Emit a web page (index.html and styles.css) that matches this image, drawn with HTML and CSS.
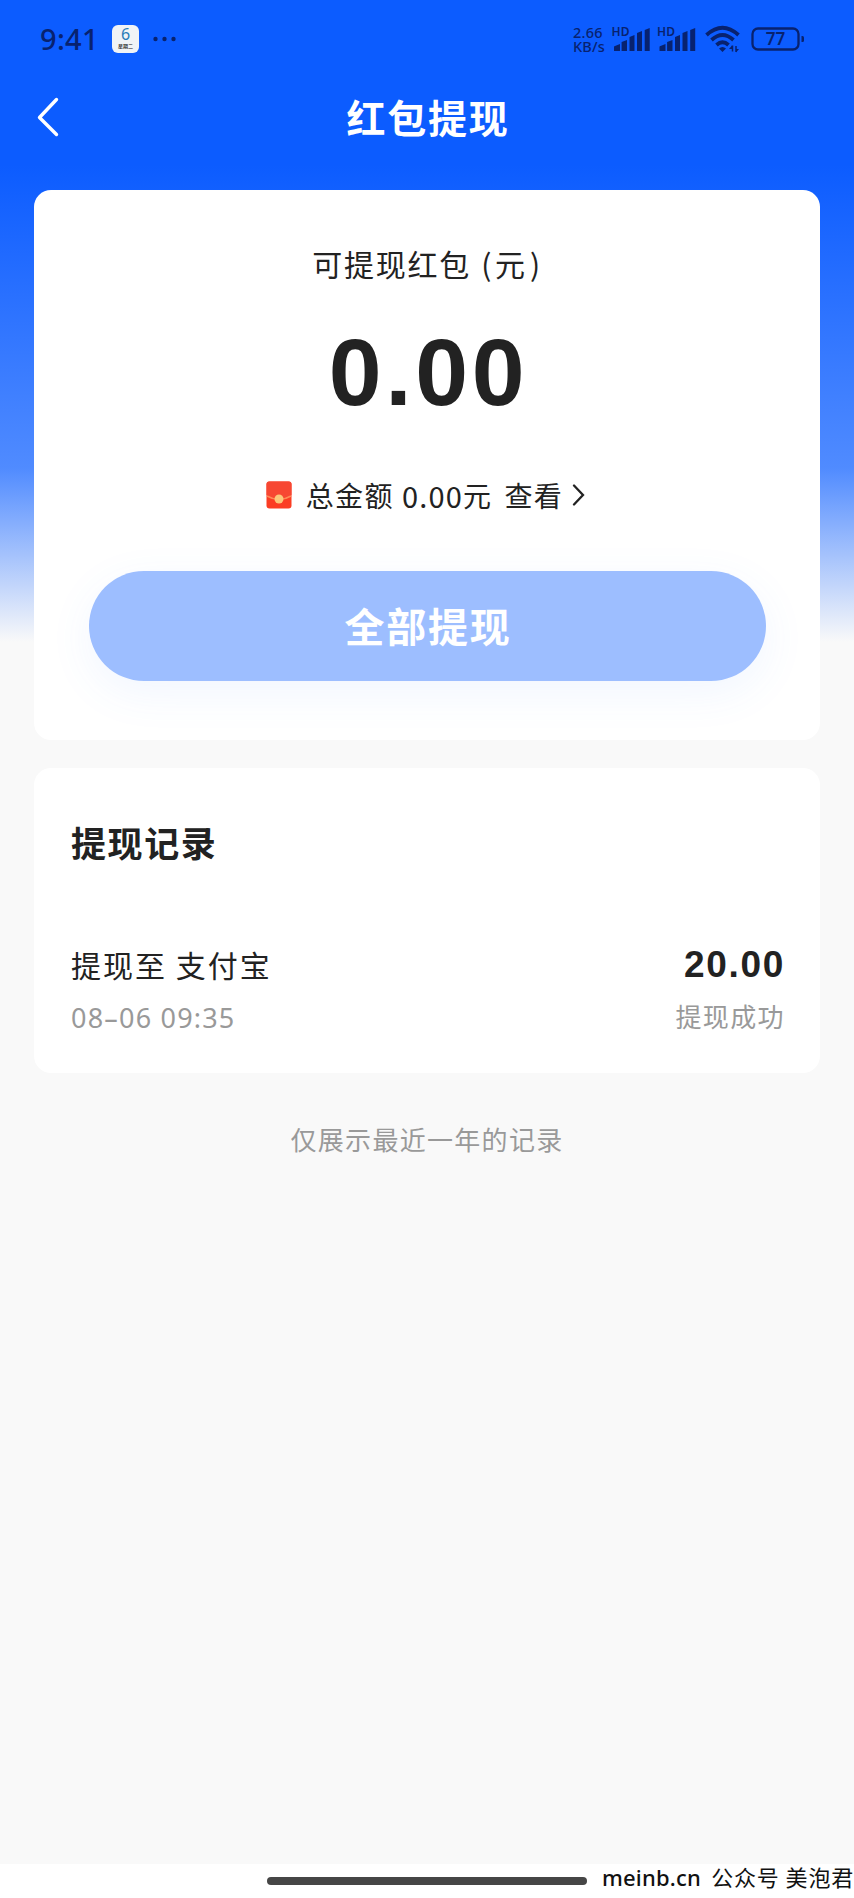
FILE: index.html
```
<!DOCTYPE html>
<html lang="zh-CN">
<head>
<meta charset="utf-8">
<title>红包提现</title>
<link rel="stylesheet" href="styles.css">
</head>
<body>
<div class="screen">
  <div class="status">
    <span class="time">9:41</span>
    <div class="calendar"><span class="day">6</span><span class="weekday">星期二</span></div>
    <svg class="dots" width="24" height="6" viewBox="0 0 24 6"><circle cx="2.5" cy="3" r="2.2"/><circle cx="11.5" cy="3" r="2.2"/><circle cx="20.5" cy="3" r="2.2"/></svg>
    <div class="speed">2.66<br>KB/s</div>
    <svg class="indicators" width="194" height="32" viewBox="612 23 194 32">
      <g id="signal">
        <text x="611.5" y="35.5" class="hd" textLength="18">HD</text>
        <path d="M614 51v-4q0-1 1-1l5-2v7zM621.6 51v-9l5.400-2v11zM629.500 51v-14l5-2v16zM637 51v-18l5-2v20zM644.700 51v-21l5-2v23z"/>
      </g>
      <use href="#signal" x="45.500"/>
      <g fill="none" stroke="#08226f" stroke-width="3.800">
        <path d="M706.500 35Q722.500 20.500 738.500 35"/>
        <path d="M711.500 40Q722.500 30 733.500 40"/>
        <path d="M716.500 45Q722.500 39.500 728.500 45"/>
      </g>
      <path d="M719 48.500q3.500-3 7 0l-3.500 3.500zM729 49l3-3.500v3.500zM736 49h3l-3 3.500z"/>
      <path d="M732.500 45.500v6M736 46v6" stroke="#08226f" stroke-width="1.500"/>
      <rect x="752.500" y="28.500" width="46" height="21" rx="5.500" fill="none" stroke="#08226f" stroke-width="2.300"/>
      <path d="M801.500 36h1q1.500 0 1.500 1.500v3q0 1.500-1.500 1.500h-1z"/>
      <text x="775.500" y="45" class="charge" text-anchor="middle">77</text>
    </svg>
  </div>
  <header class="nav">
    <svg class="back" width="24" height="42" viewBox="0 0 24 42"><path d="M20.500 3.500L3.500 21.500l17 17"/></svg>
    <h1>红包提现</h1>
  </header>
  <main>
    <section class="card balance">
      <p class="label">可提现红包<span class="paren">(</span>元<span class="paren close">)</span></p>
      <p class="amount">0.00</p>
      <p class="total">
        <svg class="packet" width="26" height="28" viewBox="0 0 26 28">
          <rect x=".5" y=".5" width="25" height="27" rx="3" fill="#fb3d23"/>
          <path d="M.5 3q0-2.500 2.500-2.500h20q2.500 0 2.500 2.500v11q-12.500 7-25 0z" fill="#f74732"/>
          <path d="M1 15q12 7 24 0" fill="none" stroke="#ff8a57" stroke-width="1.500"/>
          <circle cx="13" cy="18" r="4.500" fill="#fbc77a"/>
        </svg>
        <span class="sum">总金额</span><span class="value">0.00</span><span class="yuan">元</span><span class="view">查看</span>
        <svg class="more" width="13" height="22" viewBox="0 0 13 22"><path d="M2 1.500L11 11 2 20.500"/></svg>
      </p>
      <button class="withdraw">全部提现</button>
    </section>
    <section class="card records">
      <h2>提现记录</h2>
      <div class="row">
        <div class="left"><span class="target">提现至 支付宝</span><span class="date">08–06 09:35</span></div>
        <div class="right"><span class="money">20.00</span><span class="state">提现成功</span></div>
      </div>
    </section>
    <p class="note">仅展示最近一年的记录</p>
  </main>
  <footer class="bottom">
    <div class="handle"></div>
    <span class="site">meinb.cn</span><span class="account">公众号</span><span class="name">美泡君</span>
  </footer>
</div>
</body>
</html>
```
FILE: styles.css
```
* { box-sizing: border-box; margin: 0; padding: 0; }
body { font-family: "Noto Sans", "Noto Sans CJK SC", sans-serif; color: #222; }
.screen {
  width: 854px; height: 1898px; overflow: hidden;
  display: flex; flex-direction: column;
  background: linear-gradient(#0c5cff 0, #0c5cff 165px, #508bff 468px, #f9f9f9 642px);
}
svg { display: block; flex: none; }
span { white-space: nowrap; }
.status { height: 78px; display: flex; align-items: center; padding-left: 40px; color: #08226f; }
.time { width: 72px; font-size: 29px; font-weight: 500; line-height: 38px; padding-bottom: 1px; letter-spacing: .3px; }
.calendar {
  width: 27px; height: 28px; border-radius: 6px; background: #f0f3f6;
  display: flex; flex-direction: column; align-items: center;
}
.day { font-size: 16px; line-height: 18px; height: 18px; color: #287cb8; }
.weekday { font: 500 5px/6px "Noto Sans CJK SC", sans-serif; color: #222; }
.dots { margin-left: 14px; fill: #08226f; }
.speed { margin-left: 396px; width: 39px; font-size: 14.5px; line-height: 14.5px; font-weight: 500; letter-spacing: .2px; }
.indicators { fill: #08226f; }
.hd { font: 600 12px "Noto Sans", sans-serif; }
.charge { font: 600 17px "Noto Sans", sans-serif; }
.nav { height: 112px; display: grid; grid-template-columns: 100px 1fr 100px; align-items: start; padding-top: 18px; }
.back { margin-left: 36px; fill: none; stroke: #fff; stroke-width: 3.4; stroke-linecap: round; stroke-linejoin: round; }
.nav h1 { font: 700 39px/40px "Noto Sans CJK SC", sans-serif; letter-spacing: 1.8px; color: #fff; text-align: center; padding-left: 2px; }
main { flex: 1; padding: 0 34px; }
.card { background: #fff; border-radius: 17px; }
.balance { height: 550px; display: flex; flex-direction: column; align-items: center; padding-top: 48px; }
.label { font: 30px/50px "Noto Sans CJK SC", sans-serif; letter-spacing: 1.8px; }
.paren { font-size: 30px; margin: 0 2px 0 10px; }
.close { margin: 0 0 0 3px; }
.amount { font: 700 95px/100px "Liberation Sans", sans-serif; letter-spacing: 3.6px; padding-left: 3px; margin-top: 34px; }
.total { display: flex; align-items: center; height: 44px; margin-top: 51px; padding-right: 3px; font: 28px/44px "Noto Sans CJK SC", sans-serif; letter-spacing: 1.4px; }
.packet { margin-right: 14px; }
.value { margin-left: 8px; font-size: 29px; letter-spacing: 1.2px; }
.view { margin-left: 12px; }
.more { margin-left: 9px; fill: none; stroke: #222; stroke-width: 2.3; stroke-linecap: round; }
.withdraw {
  width: 677px; height: 110px; margin-top: 54px; border: 0; border-radius: 55px;
  background: #9dbeff; color: #fff; box-shadow: 0 12px 44px rgba(80, 139, 255, .08);
  font: 700 40px/108px "Noto Sans CJK SC", sans-serif; letter-spacing: 1.7px; padding: 0 0 2px 2px;
}
.records { height: 305px; margin-top: 28px; padding: 49px 36px 0 37px; }
.records h2 { font: 700 35px/50px "Noto Sans CJK SC", sans-serif; letter-spacing: 1.6px; }
.row { display: flex; justify-content: space-between; margin-top: 72px; }
.left, .right { display: flex; flex-direction: column; }
.right { align-items: flex-end; }
.target { font: 30px/50px "Noto Sans CJK SC", sans-serif; letter-spacing: 2px; }
.date { font-size: 27px; line-height: 58px; letter-spacing: 1.2px; color: #999; }
.money { font: 700 37px/52px "Liberation Sans", sans-serif; letter-spacing: 1.7px; margin-right: -1px; }
.state { font: 26px/50px "Noto Sans CJK SC", sans-serif; letter-spacing: 1.4px; margin-right: -1px; color: #999; }
.note { margin-top: 41px; text-align: center; font: 26px/50px "Noto Sans CJK SC", sans-serif; letter-spacing: 1.3px; color: #999; }
.bottom { height: 34px; background: #fff; display: flex; align-items: flex-start; padding-left: 267px; color: #111; font-size: 22px; line-height: 26px; }
.handle { width: 320px; height: 8px; border-radius: 4px; background: #464646; margin: 13px 15px 0 0; flex: none; }
.site { width: 110px; font-weight: 500; letter-spacing: .2px; }
.account { width: 75px; letter-spacing: .8px; }
.name { letter-spacing: .8px; }
```
